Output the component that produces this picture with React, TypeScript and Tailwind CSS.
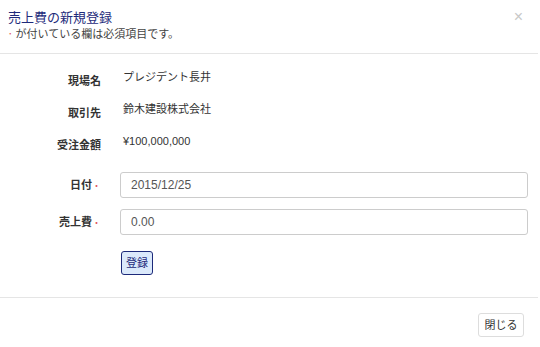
export default function App() {
  const font = { fontFamily: '"Liberation Sans", "Noto Sans CJK JP", sans-serif' };
  return (
    <div className="w-[540px] h-[347px] bg-white text-[#333]" style={font}>
      <div className="w-[538px] flex flex-col">
        {/* header */}
        <div className="relative h-[54px] border-b border-[#e5e5e5] px-2 pt-[9px]">
          <h1 className="text-[13px] leading-[18px] text-[#1d2a7a]">売上費の新規登録</h1>
          <p className="flex items-center text-[11px] leading-[14px] text-[#444]">
            <span className="mr-[3px] text-[9px] leading-none text-[#e0555a]">･</span>
            <span>が付いている欄は必須項目です。</span>
          </p>
          <span className="absolute right-[15px] top-[9px] text-[16px] leading-none text-[#c8c8c8]">×</span>
        </div>

        {/* body */}
        <div className="h-[243px] pt-[15px] pr-[10px]">
          <div className="flex flex-col gap-[14px]">
            <div className="flex h-[18px]">
              <div className="w-[101px] text-right text-[11px] font-bold pt-[4px]">現場名</div>
              <div className="ml-[22px] text-[11px]">プレジデント長井</div>
            </div>
            <div className="flex h-[18px]">
              <div className="w-[101px] text-right text-[11px] font-bold pt-[4px]">取引先</div>
              <div className="ml-[22px] text-[11px]">鈴木建設株式会社</div>
            </div>
            <div className="flex h-[18px]">
              <div className="w-[101px] text-right text-[11px] font-bold pt-[4px]">受注金額</div>
              <div className="ml-[22px] text-[11px]">¥100,000,000</div>
            </div>
          </div>

          <div className="mt-[21px] flex flex-col gap-[11px]">
            <div className="flex items-center">
              <div className="w-[101px] text-right text-[11px] font-bold">
                日付<span className="text-[#e0555a] font-normal text-[9px]">・</span>
              </div>
              <input
                readOnly
                value="2015/12/25"
                className="ml-[19px] h-[26px] w-[408px] rounded-[3px] border border-[#ccc] px-[10px] text-[12px] text-[#555] outline-none"
                style={font}
              />
            </div>
            <div className="flex items-center">
              <div className="w-[101px] text-right text-[11px] font-bold">
                売上費<span className="text-[#e0555a] font-normal text-[9px]">・</span>
              </div>
              <input
                readOnly
                value="0.00"
                className="ml-[19px] h-[26px] w-[408px] rounded-[3px] border border-[#ccc] px-[10px] text-[12px] text-[#555] outline-none"
                style={font}
              />
            </div>
            <div className="pl-[121px] pt-[4px]">
              <button className="h-[24px] w-[32px] rounded-[3px] border border-[#1d2a7a] bg-[#dbe9fb] text-[11px] text-[#1d2a7a]">
                登録
              </button>
            </div>
          </div>
        </div>

        {/* footer */}
        <div className="h-[50px] border-t border-[#e5e5e5] flex justify-end items-start pt-[15px] pr-[14px]">
          <button className="h-[24px] w-[46px] rounded-[3px] border border-[#ddd] bg-white text-[11px] text-[#333]">
            閉じる
          </button>
        </div>
      </div>
    </div>
  );
}
